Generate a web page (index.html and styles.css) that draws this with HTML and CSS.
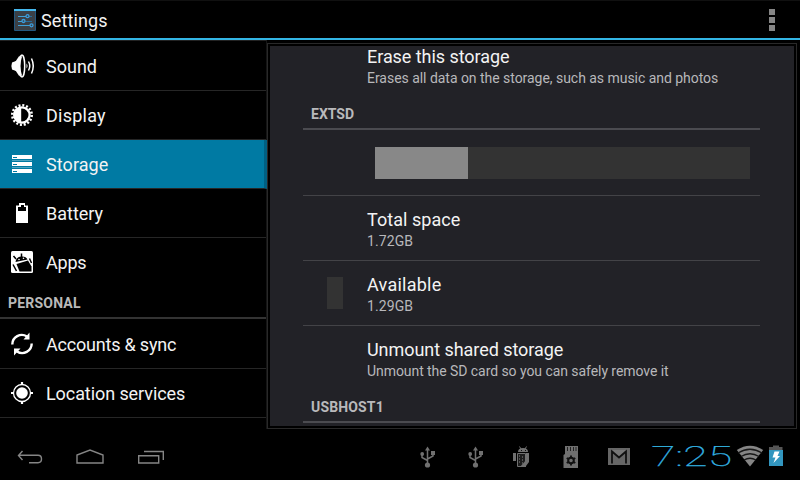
FILE: index.html
```
<!DOCTYPE html>
<html lang="en">
<head>
<meta charset="utf-8">
<title>Settings</title>
<link rel="stylesheet" href="styles.css">
</head>
<body>
<header class="bar">
  <svg class="logo" width="22" height="22" viewBox="0 0 22 22">
    <rect width="22" height="22" rx="1" fill="#235880"/><rect x="1" y="2" width="20" height="19" fill="#3b4046"/>
    <rect width="22" height="2" fill="#45b8ee"/>
    <path d="M4 7.5h14M4 12.5h14M4 16.5h14" stroke="#276d9c" fill="none"/>
    <path d="M4 7.5h9M4 12.5h5M4 16.5h13" stroke="#3fa0d8" fill="none"/>
    <g fill="#3b4046" stroke="#3c9ddd" stroke-width="1.3"><circle cx="13.5" cy="7.2" r="1.5"/><circle cx="9.5" cy="12" r="1.5"/><circle cx="17.5" cy="16.3" r="1.5"/></g>
  </svg>
  <h1>Settings</h1>
  <div class="overflow"><i></i><i></i><i></i></div>
</header>
<main>
  <nav>
    <a class="row">
      <svg width="24" height="26" viewBox="0 0 24 26"><path d="M2 9.5 6 8V18L2 16.500Q.8 13 2 9.500Z" fill="#fff"/><path d="M5.500 8.500 9.500 2.500V23.500L5.500 17.500Z" fill="#fff"/><ellipse cx="12" cy="13" rx="2.700" ry="11" fill="none" stroke="#fff" stroke-width="1.500"/><path d="M9 3.500H12Q9 13 12 22.500H9Z" fill="#fff"/><path d="M16.500 10.500Q18.500 13 16.500 15.500Z" fill="#fff"/><path d="M18.500 8.500Q21 13 18.500 17.500M21.500 5.500Q25 13 21.500 20.500" fill="none" stroke="#fff" stroke-width="1.500"/></svg>
      <span>Sound</span></a>
    <a class="row">
      <svg width="24" height="24" viewBox="-12 -12 24 24"><circle r="9.700" fill="none" stroke="#fff" stroke-width="2.600" stroke-dasharray="2 1.809"/><circle r="7.600" fill="none" stroke="#fff" stroke-width="2.200"/><path d="M-.8-8V8A8 8 0 0 1-.8-8Z" fill="#fff"/></svg>
      <span class="display">Display</span></a>
    <a class="row active">
      <svg width="24" height="24" viewBox="0 0 24 24"><path fill="#fff" d="M2 3h20v4H2zM2 10h20v4H2zM2 17h20v4H2z"/><path d="M3 5.500h4M3 12.500h4M3 19.500h4" stroke="#007aa3"/><path d="M2 8.500h20M2 15.500h20" stroke="#4da4c0"/></svg>
      <span class="storage">Storage</span></a>
    <a class="row">
      <svg width="24" height="24" viewBox="0 0 24 24"><path d="M6 22V4.500H9V2h6v2.500h3V22Z" fill="#fff"/><path d="M8 6h3V4h3v2h2v4H8z" fill="#000"/></svg>
      <span>Battery</span></a>
    <a class="row last">
      <svg width="24" height="24" viewBox="0 0 24 24"><rect x="1" y="1" width="22" height="22" rx="1.500" fill="#fff"/><path d="M5.500 12Q6 7 11 6.500T17.500 9.500Z" fill="#000"/><path d="M6.500 14 18 10.500 21.500 16.500V21.500H9.500Z" fill="#000"/><path d="M6 9 3.500 6M11.500 7V3.500M3 14.500 6.500 21M19.500 8.500 21.500 13" stroke="#000" stroke-width="1.500" fill="none"/><circle cx="9" cy="9.500" r=".8" fill="#fff"/><circle cx="13.500" cy="8.300" r=".8" fill="#fff"/></svg>
      <span class="apps">Apps</span></a>
    <h2>PERSONAL</h2>
    <a class="row">
      <svg width="24" height="24" viewBox="0 0 24 24"><path d="M2.300 12.500A9.500 9.500 0 0 1 17 4.500M21.700 11.500A9.500 9.500 0 0 1 7 19.500" fill="none" stroke="#fff" stroke-width="2.400"/><path d="M19.500.5V7.500H13.500ZM4 23.500V16.500H10.500Z" fill="#fff"/></svg>
      <span class="sync">Accounts &amp; sync</span></a>
    <a class="row">
      <svg width="24" height="24" viewBox="0 0 24 24"><circle cx="12" cy="12" r="5.800" fill="#fff"/><circle cx="12" cy="12" r="8.500" fill="none" stroke="#fff" stroke-width="1.300"/><path d="M12 1v3M12 20v3M1 12h3M20 12h3" stroke="#fff" stroke-width="2.200"/></svg>
      <span class="location">Location services</span></a>
  </nav>
  <div class="frame">
    <section class="panel">
      <div class="item erase"><b class="unmount">Erase this storage</b><small class="s1">Erases all data on the storage, such as music and photos</small></div>
      <h3>EXTSD</h3>
      <div class="usage"><div class="track"><div class="fill"></div></div></div>
      <div class="item"><b class="total">Total space</b><small class="gb">1.72GB</small></div>
      <div class="item"><i class="swatch"></i><b class="avail">Available</b><small class="gb">1.29GB</small></div>
      <div class="item plain"><b class="unmount">Unmount shared storage</b><small class="s2">Unmount the SD card so you can safely remove it</small></div>
      <h3 class="usb">USBHOST1</h3>
    </section>
  </div>
</main>
<footer>
  <svg class="keys" width="180" height="44" viewBox="0 0 180 44" fill="none" stroke="#858585" stroke-width="1.400"><path d="M22.500 15 18.500 19.500 22.500 24M18.500 19.300H38Q41.500 19.300 41.500 23T38 26.700H29"/><path d="M77 27V19L90 14 103 19V27Z"/><path d="M138.700 19.700h20v7.300h-20zM144 15.500h19.300V24"/></svg>
  <div class="tray">
    <svg width="48" height="44" viewBox="400 436 48 44"><use href="#usb"/></svg>
    <svg width="48" height="44" viewBox="400 436 48 44"><g id="usb"><path d="M427.500 450V464M427.500 460.500 422 457.500V454M427.500 459 433 456V452" fill="none" stroke="#707070" stroke-width="1.500"/><path d="M427.500 446.500 430 450.500H425ZM431 451h4v4h-4z" fill="#707070"/><circle cx="422.200" cy="454" r="1.900" fill="#707070"/><circle cx="427.500" cy="465" r="2.600" fill="#707070"/></g></svg>
    <svg width="48" height="44" viewBox="496 436 48 44"><path d="M518 452Q518 448 523 448T528 452Z" fill="#707070"/><path d="M519.500 446.500 521 449M526.500 446.500 525 449" stroke="#707070"/><path d="M513 453h3v8h-3zM526 453h3v9l-3 4z" fill="#707070"/><path d="M517.500 453.500h8v13h-8z" fill="#1c1c1c" stroke="#707070"/><path d="M526 460v7h-6z" fill="#707070"/><path d="M519 456h1m2 1h1m-4 2h1m2 1h1m-4 2h1m2 1h1" stroke="#888"/><path d="M521 450.500h1m3 0h1" stroke="#111"/></svg>
    <svg width="48" height="44" viewBox="544 436 48 44"><path d="M565 446h13v22h-14.500V455l1.500-1Z" fill="#707070"/><path d="M567.500 447v4M570.500 447v4M573.500 447v4M576 447v4" stroke="#222"/><circle cx="571" cy="460.500" r="2.800" fill="none" stroke="#111" stroke-width="2"/><path d="M571 455.500v2M571 463.500v2M566.700 458l1.700 1M573.600 462l1.700 1M566.700 463l1.700-1M573.600 459l1.700-1" stroke="#111" stroke-width="1.800"/></svg>
    <svg width="48" height="44" viewBox="592 436 48 44"><path d="M608 448h22v17h-22z" fill="#666"/><path d="M612 450h14L619 456.500Z" fill="#777"/><path d="M612 463.500V451.500L619 457.500 626 451.500V463.500" fill="none" stroke="#111" stroke-width="1.800"/></svg>
  </div>
  <div class="clock"><span>7:25</span></div>
  <svg class="status" width="64" height="44" viewBox="736 436 64 44"><path d="M750 466.500 736.800 450Q750 441.500 763.200 450Z" fill="#858585"/><path d="M738 453Q750 445.500 762 453M741 456.500Q750 451 759 456.500M744 460Q750 456.500 756 460" stroke="#171717" stroke-width="1.300" fill="none"/><path d="M773 445.500h6V447h3.500v4H769v-4h4z" fill="#555"/><path d="M769 450h14v16h-14z" fill="#3296bf"/><path d="M774.500 451.500h5L777.500 456h2.500L773.500 463 775.500 457.500h-3Z" fill="#fff"/></svg>
</footer>
</body>
</html>
```
FILE: styles.css
```
* { box-sizing: border-box; }
body { margin: 0; width: 800px; height: 480px; background: #000; color: #f3f3f3; font-family: Roboto, "Liberation Sans", sans-serif; overflow: hidden; display: flex; flex-direction: column; }
h1, h2, h3 { margin: 0; }
.bar { height: 40px; flex: none; border-top: 1px solid #101010; border-bottom: 2px solid #33b5e5; display: flex; align-items: center; padding: 0 25px 0 14px; }
.logo { flex: none; }
h1 { font-size: 18px; font-weight: 400; margin-left: 5px; line-height: 24px; padding-top: 3px; letter-spacing: .1px; }
.overflow { margin-left: auto; display: flex; flex-direction: column; gap: 2px; padding-top: 1px; }
.overflow i { width: 6px; height: 6px; background: #858585; }
main { height: 390px; flex: none; display: flex; }
nav { width: 267px; border-right: 1px solid #151515; border-top: 1px solid #222; padding-top: 1px; height: 389px; }
.row { display: flex; align-items: center; height: 49px; border-bottom: 1px solid #262626; padding-left: 10px; font-size: 18px; }
.row svg { width: 24px; flex: none; }
.row span { margin-left: 12px; line-height: 24px; padding-top: 2px; }
.row.active { background: #007aa3; border-right: 3px solid #006083; margin-right: -1px; }
.row.last { border-bottom: 0; padding-bottom: 2px; }
.display { letter-spacing: .25px; }
.storage { letter-spacing: .08px; }
.apps { letter-spacing: -.2px; }
.sync { letter-spacing: -.2px; }
.location { letter-spacing: -.08px; }
h2 { height: 32px; border-bottom: 2px solid #333; margin-bottom: 1px; padding-left: 8px; font-size: 14px; line-height: 32px; color: #b9b9b9; font-weight: 700; letter-spacing: .2px; }
.frame { width: 530px; height: 386px; margin-top: 3px; border: 1px solid #292929; padding: 2px; }
.panel { width: 524px; height: 380px; background: #222227; overflow: hidden; padding: 0 34px 0 33px; }
.item { height: 65px; padding: 12px 0 0 64px; border-bottom: 1px solid #434347; position: relative; }
.item b { display: block; font-size: 18px; font-weight: 400; line-height: 24px; white-space: nowrap; }
.item small { display: block; font-size: 14px; line-height: 18px; color: #b8b8bb; white-space: nowrap; }
.item.erase { height: 52px; padding-top: 0; border: 0; }
.item.erase b { margin-top: -1px; }
.item.plain { border: 0; height: 64px; }
.item .s1 { letter-spacing: -.035px; }
.item .s2 { letter-spacing: -.06px; }
.item .gb { letter-spacing: .1px; }
.item .avail { letter-spacing: .25px; }
.item .total { letter-spacing: .05px; }
.item .unmount { letter-spacing: -.05px; }
h3 { height: 33px; border-bottom: 2px solid #4b4b50; padding-left: 8px; font-size: 14px; line-height: 34px; color: #b9b9bb; font-weight: 700; }
.usb { letter-spacing: .15px; }
.usage { height: 66px; padding: 17px 10px 0 72px; border-bottom: 1px solid #434347; }
.track { height: 32px; background: #333; }
.fill { width: 93px; height: 32px; background: #888; }
.swatch { position: absolute; left: 24px; top: 16px; width: 16px; height: 32px; background: #333; }
footer { height: 50px; display: flex; align-items: flex-end; }
footer svg { display: block; flex: none; }
.tray { display: flex; margin-left: 220px; width: 240px; flex: none; }
.clock { width: 96px; flex: none; height: 44px; color: #33b5e5; font-size: 28px; font-weight: 100; line-height: 42px; padding-left: 11px; white-space: nowrap; -webkit-text-stroke: .25px #33b5e5; }
.clock span { display: inline-block; transform: scaleX(1.59); transform-origin: left; }
```
